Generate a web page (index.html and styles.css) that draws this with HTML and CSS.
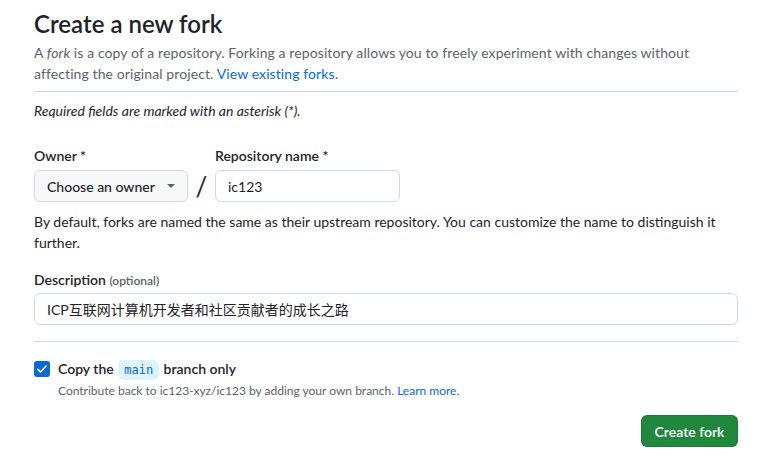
FILE: index.html
```html
<!DOCTYPE html>
<html lang="en">
<head>
<meta charset="utf-8">
<link rel="stylesheet" href="styles.css">
</head>
<body>
<main class="page">
  <h1 class="title">Create a new fork</h1>
  <p class="lead">A <em>fork</em> is a copy of a repository. Forking a repository allows you to freely experiment with changes without affecting the original project. <a href="#" class="link">View existing forks.</a></p>
  <hr class="divider">
  <p class="required">Required fields are marked with an asterisk (*).</p>

  <div class="owner-row">
    <div class="field">
      <label class="label">Owner *</label>
      <button class="select">Choose an owner <span class="caret"></span></button>
    </div>
    <span class="slash">/</span>
    <div class="field">
      <label class="label">Repository name *</label>
      <input class="input name-input" value="ic123">
    </div>
  </div>
  <p class="help">By default, forks are named the same as their upstream repository. You can customize the name to distinguish it further.</p>

  <div class="field desc-field">
    <label class="label desc-label">Description <span class="optional">(optional)</span></label>
    <input class="input desc-input" value="ICP互联网计算机开发者和社区贡献者的成长之路">
  </div>

  <hr class="divider divider2">

  <div class="check-row">
    <span class="checkbox">
      <svg width="12" height="12" viewBox="0 0 16 16"><path d="M2.5 8.5l3.5 3.5 7.5-8" fill="none" stroke="#fff" stroke-width="2" stroke-linecap="round" stroke-linejoin="round"/></svg>
    </span>
    <div class="check-text">
      <div class="check-label">Copy the <code class="branch">main</code> branch only</div>
      <div class="check-note">Contribute back to ic123-xyz/ic123 by adding your own branch. <a href="#" class="link">Learn more.</a></div>
    </div>
  </div>

  <div class="actions">
    <button class="create">Create fork</button>
  </div>
</main>
</body>
</html>
```
FILE: styles.css
```css
* { box-sizing: border-box; }
html, body { margin: 0; padding: 0; background: #fff; }
body {
  font-family: Lato, "Noto Sans CJK SC", sans-serif;
  font-size: 14px;
  line-height: 21px;
  color: #1f2328;
}
.page {
  width: 704px;
  margin-left: 34px;
  padding-top: 9px;
}
.title {
  font-size: 24px;
  font-weight: 600;
  line-height: 30px;
  margin: 0 0 3px;
}
.lead {
  margin: 0;
  color: #59636e;
  letter-spacing: 0.1px;
}
.link { color: #0969da; text-decoration: none; }
.divider {
  border: 0;
  border-top: 1px solid #d1d9e0;
  margin: 7px 0 8px;
}
.required {
  margin: 0;
  font-style: italic;
}
.owner-row {
  display: flex;
  align-items: flex-end;
  margin-top: 24px;
}
.field { display: flex; flex-direction: column; }
.label {
  font-weight: 600;
  margin-bottom: 4px;
}
.desc-label { margin-bottom: 2px; }
.select {
  height: 32px;
  width: 154px;
  border: 1px solid #d1d9e0;
  border-radius: 6px;
  background: #f6f8fa;
  font: 500 14px Lato, sans-serif;
  color: #1f2328;
  padding: 0 12px;
  display: flex;
  align-items: center;
  justify-content: space-between;
}
.caret {
  width: 0; height: 0;
  border-left: 4px solid transparent;
  border-right: 4px solid transparent;
  border-top: 4px solid #59636e;
}
.slash {
  font-size: 26px;
  width: 27px;
  text-align: center;
  line-height: 32px;
  height: 32px;
}
.input {
  height: 32px;
  border: 1px solid #d1d9e0;
  border-radius: 6px;
  padding: 0 12px;
  font: 14px Lato, "Noto Sans CJK SC", sans-serif;
  color: #1f2328;
  background: #fff;
}
.name-input { width: 185px; }
.help {
  margin: 9px 0 0;
  color: #1f2328;
}
.desc-field { margin-top: 16px; }
.optional {
  font-size: 12px;
  color: #59636e;
  font-weight: 600;
}
.desc-input { width: 704px; }
.divider2 { margin: 16px 0 16px; }
.check-row {
  display: flex;
  gap: 8px;
  align-items: flex-start;
}
.checkbox {
  width: 16px; height: 16px;
  margin-top: 3px;
  background: #0969da;
  border-radius: 3px;
  display: flex;
  align-items: center;
  justify-content: center;
}
.check-label { font-weight: 600; }
.branch {
  display: inline-block;
  font: 12px/20px "DejaVu Sans Mono", monospace;
  background: #ddf4ff;
  color: #0969da;
  padding: 0 6px;
  border-radius: 6px;
  margin: 0 1px;
}
.check-note {
  font-size: 12px;
  color: #59636e;
  line-height: 18px;
  margin-top: 2px;
}
.actions {
  display: flex;
  justify-content: flex-end;
  margin-top: 15px;
}
.create {
  height: 32px;
  width: 97px;
  padding: 0 12px;
  border: 1px solid rgba(31,35,40,0.15);
  border-radius: 6px;
  background: #1f883d;
  color: #fff;
  font: 600 14px Lato, sans-serif;
}
```
